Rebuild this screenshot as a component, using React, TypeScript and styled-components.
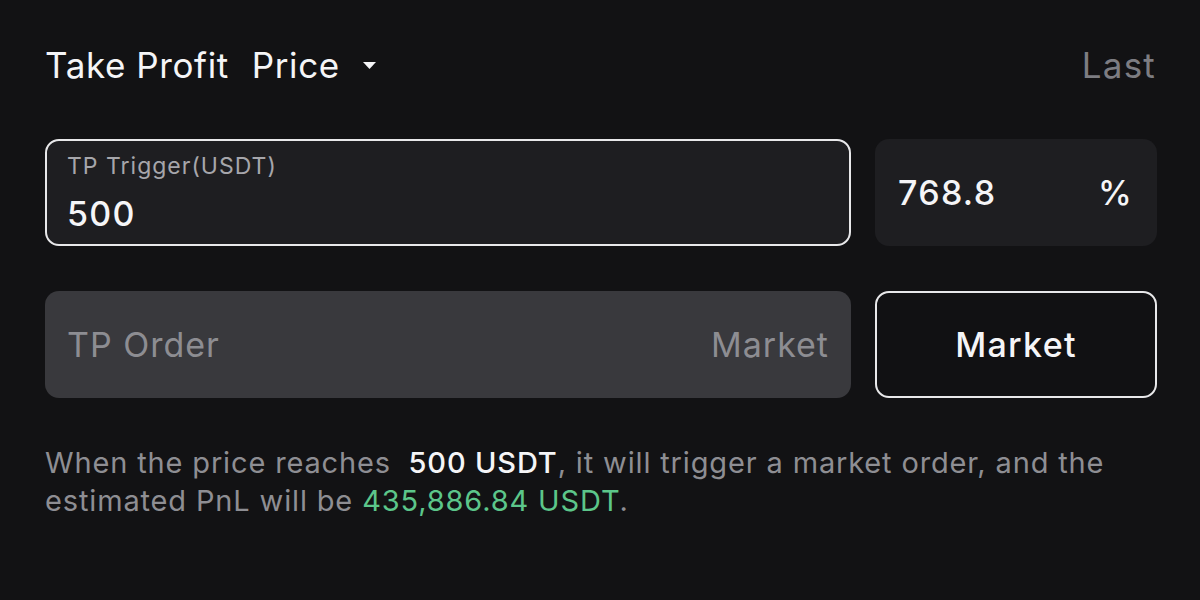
import React from "react";
import styled, { createGlobalStyle } from "styled-components";

const Global = createGlobalStyle`
  html, body { margin: 0; padding: 0; background: #121214; }
  body { font-family: Inter, "Noto Sans", sans-serif; color: #f5f5f7; }
`;

const Page = styled.div`
  width: 1200px;
  height: 600px;
  box-sizing: border-box;
  padding: 43px 44px 0 45px;
  display: flex;
  flex-direction: column;
`;

const Header = styled.div`
  display: flex;
  align-items: center;
  justify-content: space-between;
  height: 44px;
  margin-bottom: 52px;
`;

const HeaderLeft = styled.div`
  display: flex;
  align-items: center;
  gap: 23px;
`;

const Title = styled.span`
  font-size: 35px;
  font-weight: 400;
  letter-spacing: 0.6px;
  color: #f5f5f7;
`;

const Dropdown = styled.span`
  display: flex;
  align-items: center;
  gap: 22px;
  font-size: 35px;
  letter-spacing: 0.6px;
  color: #f5f5f7;
`;

const Last = styled.span`
  font-size: 35px;
  letter-spacing: 1.2px;
  color: #7d7d82;
`;

const Row = styled.div`
  display: grid;
  grid-template-columns: 806px 282px;
  gap: 24px;
  height: 107px;
  margin-bottom: 45px;
`;

const TriggerBox = styled.div`
  box-sizing: border-box;
  border: 2px solid #e8e8ea;
  border-radius: 14px;
  background: #1e1e21;
  padding: 10px 20px 0 20px;
  display: flex;
  flex-direction: column;
`;

const Label = styled.span`
  font-size: 23px;
  letter-spacing: 1px;
  color: #a6a6ab;
  line-height: 30px;
`;

const Value = styled.span`
  font-size: 34px;
  font-weight: 500;
  letter-spacing: 1.3px;
  color: #f5f5f7;
  line-height: 40px;
  margin-top: 13px;
`;

const PercentBox = styled.div`
  box-sizing: border-box;
  border-radius: 14px;
  background: #1e1e21;
  padding: 0 24px 0 23px;
  display: flex;
  align-items: center;
  justify-content: space-between;
  font-size: 34px;
  font-weight: 500;
  letter-spacing: 1.3px;
  color: #f5f5f7;
`;

const OrderBox = styled.div`
  box-sizing: border-box;
  border-radius: 14px;
  background: #39393d;
  padding: 0 22px 0 22px;
  display: flex;
  align-items: center;
  justify-content: space-between;
  font-size: 34px;
  letter-spacing: 1px;
  color: #8d8d92;
`;

const MarketButton = styled.div`
  box-sizing: border-box;
  border: 2px solid #e8e8ea;
  border-radius: 14px;
  background: #111113;
  display: flex;
  align-items: center;
  justify-content: center;
  font-size: 34px;
  font-weight: 500;
  letter-spacing: 1.3px;
  color: #f5f5f7;
`;

const Note = styled.p`
  margin: 0;
  margin-top: 1px;
  font-size: 29px;
  line-height: 38px;
  letter-spacing: 0.85px;
  color: #8e8e93;
  width: 1100px;
`;

const Strong = styled.span`
  color: #f5f5f7;
  font-weight: 500;
`;

const Green = styled.span`
  color: #5cc68a;
`;

const Caret = () => (
  <svg width="15" height="9" viewBox="0 0 15 9">
    <path d="M1 1 L14 1 L7.5 8 Z" fill="#f5f5f7" />
  </svg>
);

export default function App() {
  return (
    <>
      <Global />
      <Page>
        <Header>
          <HeaderLeft>
            <Title>Take Profit</Title>
            <Dropdown>
              Price
              <Caret />
            </Dropdown>
          </HeaderLeft>
          <Last>Last</Last>
        </Header>
        <Row>
          <TriggerBox>
            <Label>TP Trigger(USDT)</Label>
            <Value>500</Value>
          </TriggerBox>
          <PercentBox>
            <span>768.8</span>
            <span>%</span>
          </PercentBox>
        </Row>
        <Row>
          <OrderBox>
            <span>TP Order</span>
            <span>Market</span>
          </OrderBox>
          <MarketButton>Market</MarketButton>
        </Row>
        <Note>
          When the price reaches <Strong>&nbsp;500 USDT</Strong>, it will trigger a market order, and the estimated PnL will be{" "}
          <Green>435,886.84 USDT</Green>.
        </Note>
      </Page>
    </>
  );
}
